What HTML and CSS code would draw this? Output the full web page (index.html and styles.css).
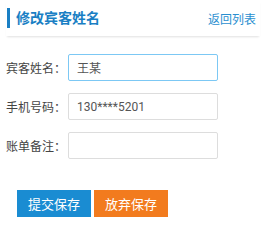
FILE: index.html
```html
<!DOCTYPE html>
<html lang="zh-CN">

<head>
    <meta charset="UTF-8">
    <meta name="viewport" content="width=device-width, initial-scale=1.0">
    <title>修改宾客姓名</title>
    <link rel="stylesheet" href="styles.css">
</head>

<body>
    <div class="page-header">
        <h1>修改宾客姓名</h1>
        <a href="#" class="back-link">返回列表</a>
    </div>

    <form class="guest-form">
        <div class="form-row">
            <label for="guestName">宾客姓名：</label>
            <input type="text" id="guestName" class="focused" value="王某">
        </div>

        <div class="form-row">
            <label for="phone">手机号码：</label>
            <input type="text" id="phone" value="130****5201">
        </div>

        <div class="form-row">
            <label for="note">账单备注：</label>
            <input type="text" id="note">
        </div>

        <div class="form-actions">
            <button type="submit" class="btn btn-submit">提交保存</button>
            <button type="button" class="btn btn-cancel">放弃保存</button>
        </div>
    </form>
</body>

</html>
```

FILE: styles.css
```css
* {
    box-sizing: border-box;
    margin: 0;
    padding: 0;
    font-family: Roboto, 'Noto Sans CJK SC', sans-serif;
}

body {
    background-color: #fff;
    width: 263px;
}

.page-header {
    display: flex;
    align-items: center;
    justify-content: space-between;
    margin: 0 3px 0 6px;
    height: 36px;
    padding: 0 4px 0 0;
    box-shadow: 0 2px 2px -1px rgba(0, 0, 0, 0.12);
}

.page-header h1 {
    font-size: 14px;
    font-weight: bold;
    color: #1a7fc4;
    border-left: 3px solid #1a7fc4;
    padding-left: 6px;
    margin-left: 1px;
    line-height: 20px;
}

.back-link {
    font-size: 12px;
    color: #2a8fd0;
    text-decoration: none;
}

.guest-form {
    padding: 18px 0 0 6px;
}

.form-row {
    display: flex;
    align-items: center;
    margin-bottom: 12px;
}

label {
    width: 62px;
    font-size: 12px;
    color: #444;
}

input {
    width: 150px;
    height: 27px;
    border: 1px solid #ddd;
    border-radius: 2px;
    padding: 0 8px;
    font-size: 12px;
    color: #555;
    outline: none;
}

input.focused {
    border-color: #7cc8f4;
}

.form-actions {
    display: flex;
    gap: 3px;
    margin: 31px 0 0 11px;
}

.btn {
    width: 74px;
    height: 27px;
    border: none;
    color: #fff;
    font-size: 13px;
    cursor: pointer;
}

.btn-submit {
    background-color: #1a8cd2;
}

.btn-cancel {
    background-color: #f27b1e;
}
```
